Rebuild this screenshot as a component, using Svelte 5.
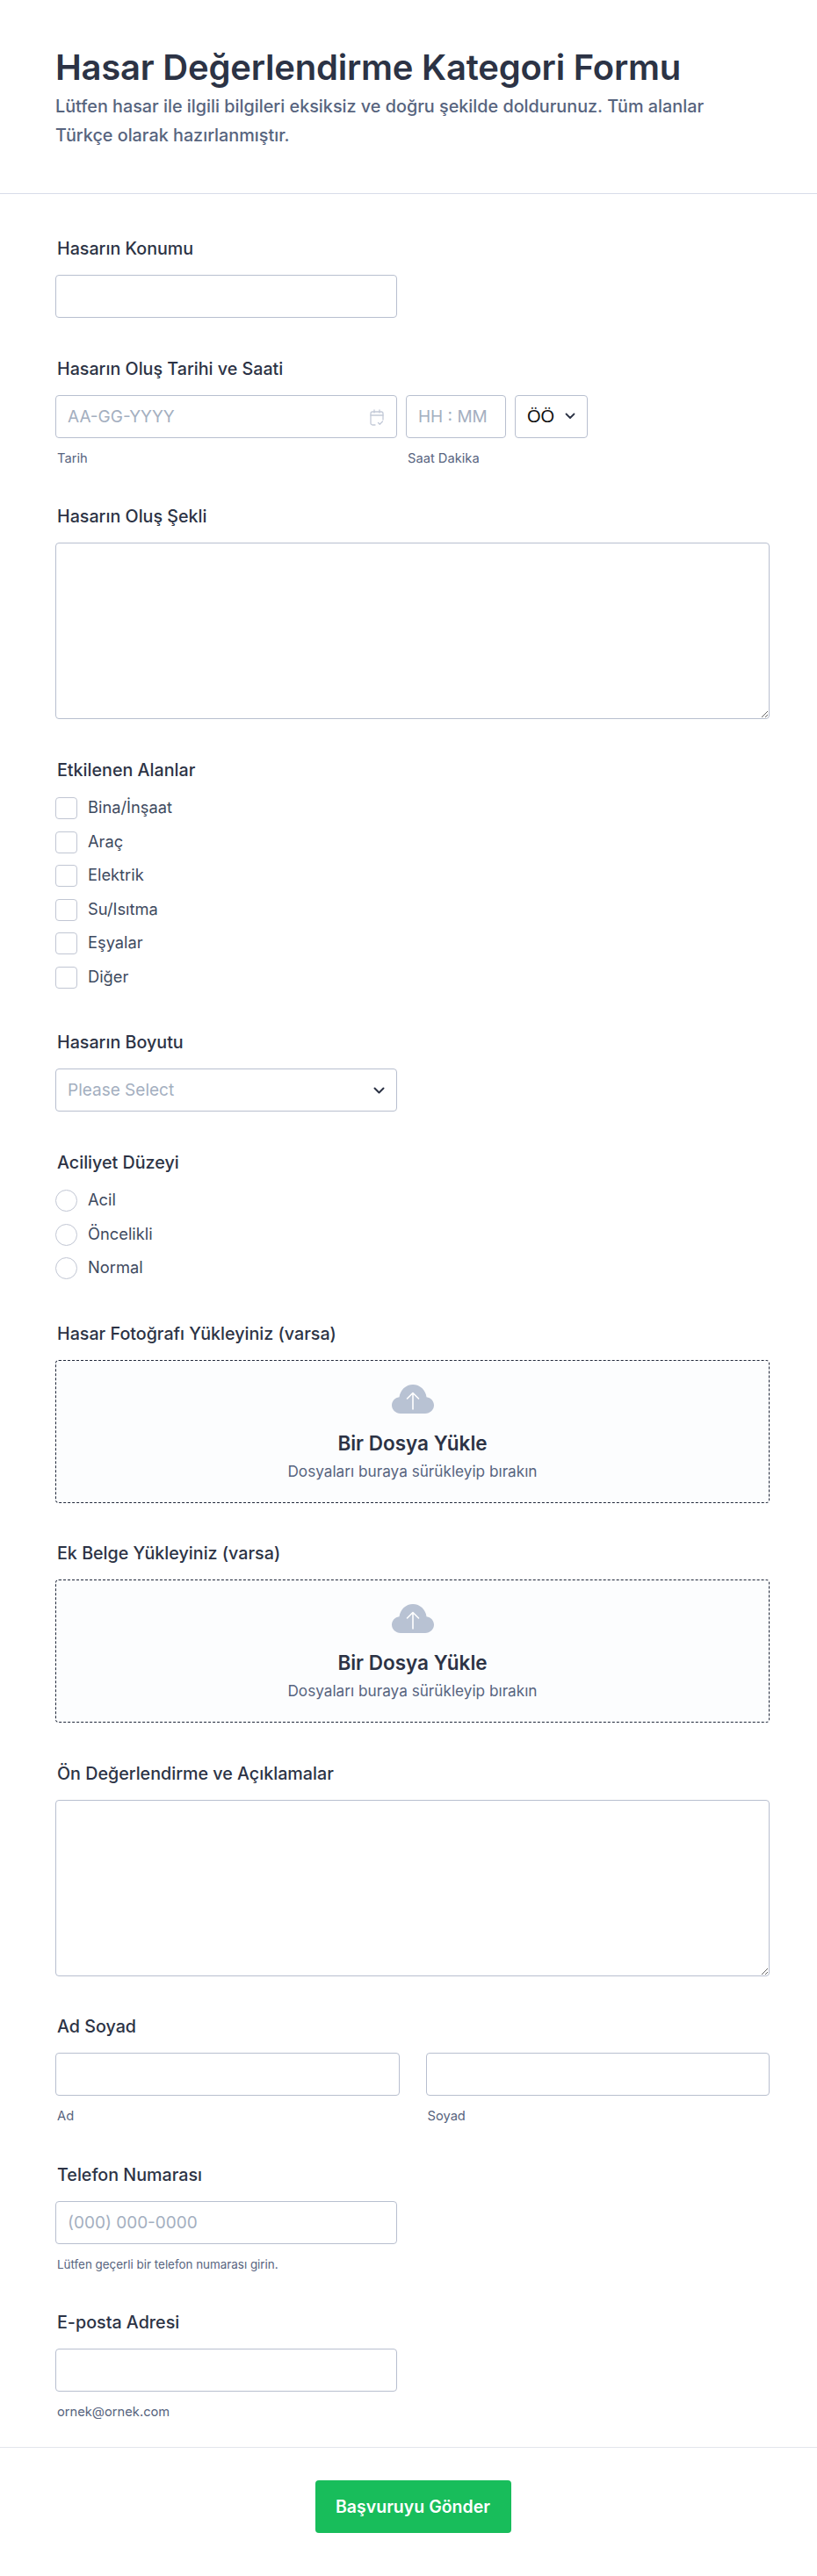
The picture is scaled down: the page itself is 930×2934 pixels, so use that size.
<script>
  const areas = ['Bina/İnşaat', 'Araç', 'Elektrik', 'Su/Isıtma', 'Eşyalar', 'Diğer'];
  const levels = ['Acil', 'Öncelikli', 'Normal'];
  const uploads = ['Hasar Fotoğrafı Yükleyiniz (varsa)', 'Ek Belge Yükleyiniz (varsa)'];
</script>

<div class="page">
  <header class="head">
    <h1>Hasar Değerlendirme Kategori Formu</h1>
    <p>Lütfen hasar ile ilgili bilgileri eksiksiz ve doğru şekilde doldurunuz. Tüm alanlar Türkçe olarak hazırlanmıştır.</p>
  </header>

  <main class="form">
    <section class="field">
      <div class="label">Hasarın Konumu</div>
      <input class="input half" type="text" />
    </section>

    <section class="field">
      <div class="label">Hasarın Oluş Tarihi ve Saati</div>
      <div class="datetime">
        <div class="col date">
          <div class="with-icon">
            <input class="input" type="text" placeholder="AA-GG-YYYY" />
            <svg class="cal" width="16" height="20" viewBox="0 0 16 20" fill="none" stroke="#c3cad8" stroke-width="1.3" stroke-linecap="round" stroke-linejoin="round">
              <path d="M6 18H3a2 2 0 0 1-2-2V5a2 2 0 0 1 2-2h10a2 2 0 0 1 2 2v7" />
              <path d="M1 7h14M5 1v3M11 1v3" />
              <path d="M9.5 15.500l1.800 1.800 3.200-3.300" />
            </svg>
          </div>
          <div class="sub">Tarih</div>
        </div>
        <div class="col time">
          <input class="input" type="text" placeholder="HH : MM" />
          <div class="sub">Saat Dakika</div>
        </div>
        <div class="ampm">
          <span>ÖÖ</span>
          <svg width="12" height="8" viewBox="0 0 12 8" fill="none" stroke="#2c3345" stroke-width="1.800" stroke-linecap="round" stroke-linejoin="round"><path d="M1.500 1.500L6 6l4.500-4.500" /></svg>
        </div>
      </div>
    </section>

    <section class="field">
      <div class="label">Hasarın Oluş Şekli</div>
      <textarea class="area"></textarea>
    </section>

    <section class="field">
      <div class="label">Etkilenen Alanlar</div>
      <div class="options">
        {#each areas as area}
          <div class="option"><span class="box"></span>{area}</div>
        {/each}
      </div>
    </section>

    <section class="field">
      <div class="label">Hasarın Boyutu</div>
      <div class="select half">
        <span>Please Select</span>
        <svg width="13" height="8" viewBox="0 0 13 8" fill="none" stroke="#2c3345" stroke-width="2" stroke-linecap="round" stroke-linejoin="round"><path d="M1.500 1.500l5 5 5-5" /></svg>
      </div>
    </section>

    <section class="field">
      <div class="label">Aciliyet Düzeyi</div>
      <div class="options">
        {#each levels as level}
          <div class="option"><span class="box round"></span>{level}</div>
        {/each}
      </div>
    </section>

    {#each uploads as title}
      <section class="field">
        <div class="label">{title}</div>
        <div class="drop">
          <svg width="48" height="33" viewBox="0 0 48 33">
            <path fill="#b8c2d3" d="M10 33C4.500 33 0 28.800 0 23.600 0 18.800 3.600 15 8.500 14.300 9.500 6.200 16 0 24 0c8 0 14.500 6.200 15.500 14.300C44.400 15 48 18.800 48 23.600 48 28.800 43.500 33 38 33z" />
            <path fill="none" stroke="#fff" stroke-width="1.600" stroke-linecap="round" stroke-linejoin="round" d="M24 28V10M17.500 16L24 9.500 30.500 16" />
          </svg>
          <div class="drop-title">Bir Dosya Yükle</div>
          <div class="drop-sub">Dosyaları buraya sürükleyip bırakın</div>
        </div>
      </section>
    {/each}

    <section class="field">
      <div class="label">Ön Değerlendirme ve Açıklamalar</div>
      <textarea class="area"></textarea>
    </section>

    <section class="field">
      <div class="label">Ad Soyad</div>
      <div class="names">
        <div class="col">
          <input class="input" type="text" />
          <div class="sub">Ad</div>
        </div>
        <div class="col">
          <input class="input" type="text" />
          <div class="sub">Soyad</div>
        </div>
      </div>
    </section>

    <section class="field">
      <div class="label">Telefon Numarası</div>
      <input class="input half" type="text" placeholder="(000) 000-0000" />
      <div class="sub hint">Lütfen geçerli bir telefon numarası girin.</div>
    </section>

    <section class="field last">
      <div class="label">E-posta Adresi</div>
      <input class="input half" type="text" />
      <div class="sub">ornek@ornek.com</div>
    </section>
  </main>

  <footer class="foot">
    <button class="send">Başvuruyu Gönder</button>
  </footer>
</div>

<style>
  :global(body) {
    margin: 0;
    background: #fff;
  }
  .page {
    font-family: Inter, "Liberation Sans", sans-serif;
    color: #2c3345;
    width: 930px;
    height: 2934px;
    overflow: hidden;
  }
  .head {
    box-sizing: border-box;
    height: 221px;
    padding: 50px 63px 0;
    border-bottom: 1px solid #d8dce9;
  }
  h1 {
    margin: 0;
    font-size: 40px;
    line-height: 54px;
    font-weight: 600;
    letter-spacing: -0.22px;
  }
  .head p {
    margin: 1px 0 0;
    max-width: 770px;
    font-size: 19.800px;
    line-height: 33px;
    font-weight: 500;
    color: #57647e;
  }
  .form {
    box-sizing: border-box;
    height: 2566px;
    padding: 47px 54px 0 63px;
  }
  .field {
    margin-bottom: 42.500px;
  }
  .label {
    height: 30px;
    margin: 0 0 15px 2px;
    font-size: 19.700px;
    line-height: 30px;
    font-weight: 500;
  }
  .input,
  .area,
  .select,
  .ampm {
    box-sizing: border-box;
    display: block;
    width: 100%;
    border: 1px solid #b8bfcf;
    border-radius: 4px;
    background: #fff;
    font-family: inherit;
    font-size: 19px;
    color: #2c3345;
  }
  .input {
    height: 49px;
    padding: 0 13px;
  }
  .input::placeholder {
    color: #a4afc0;
    opacity: 1;
  }
  .half {
    width: 389px;
  }
  .datetime {
    display: flex;
    gap: 10px;
    align-items: flex-start;
  }
  .date {
    width: 389px;
  }
  .time {
    width: 114px;
  }
  .with-icon {
    position: relative;
  }
  .cal {
    position: absolute;
    right: 15px;
    top: 16px;
  }
  .ampm {
    width: 83px;
    height: 49px;
    padding: 0 13px;
    display: flex;
    align-items: center;
    justify-content: space-between;
    font-family: "Liberation Sans", sans-serif;
    font-size: 20px;
    color: #111;
  }
  .sub {
    margin: 15px 0 0 2px;
    font-size: 14.700px;
    line-height: 17px;
    color: #57647e;
  }
  .hint {
    font-size: 13.400px;
  }
  .area {
    height: 201px;
    resize: vertical;
  }
  .options {
    display: flex;
    flex-direction: column;
    gap: 13.500px;
    padding: 1.500px 0 4px;
  }
  .option {
    display: flex;
    align-items: flex-start;
    height: 25px;
    line-height: 23px;
    font-size: 18.300px;
    color: #3e4a60;
  }
  .box {
    box-sizing: border-box;
    width: 25px;
    height: 25px;
    margin-right: 12px;
    border: 1px solid #c1c6d3;
    border-radius: 4px;
    background: #fff;
  }
  .round {
    border-radius: 50%;
  }
  .select {
    height: 49px;
    padding: 0 13px;
    display: flex;
    align-items: center;
    justify-content: space-between;
    color: #a4afc0;
  }
  .drop {
    box-sizing: border-box;
    height: 163px;
    padding-top: 27px;
    border: 1px dashed #20283a;
    border-radius: 4px;
    background: #fcfdfe;
    display: flex;
    flex-direction: column;
    align-items: center;
  }
  .drop-title {
    margin-top: 20px;
    font-size: 22.500px;
    line-height: 28px;
    font-weight: 600;
  }
  .drop-sub {
    margin-top: 6px;
    font-size: 17.200px;
    line-height: 24px;
    color: #57647e;
  }
  .names {
    display: flex;
    gap: 30px;
  }
  .names .col {
    flex: 1;
  }
  .last {
    margin-bottom: 0;
  }
  .foot {
    box-sizing: border-box;
    height: 147px;
    padding: 37px 0 0 10px;
    border-top: 1px solid #e3e5ec;
    display: flex;
    justify-content: center;
    align-items: flex-start;
  }
  .send {
    width: 223px;
    height: 60px;
    border: 0;
    border-radius: 4px;
    background: #18bd5b;
    color: #fff;
    font-family: inherit;
    font-size: 19.500px;
    font-weight: 600;
  }
</style>
